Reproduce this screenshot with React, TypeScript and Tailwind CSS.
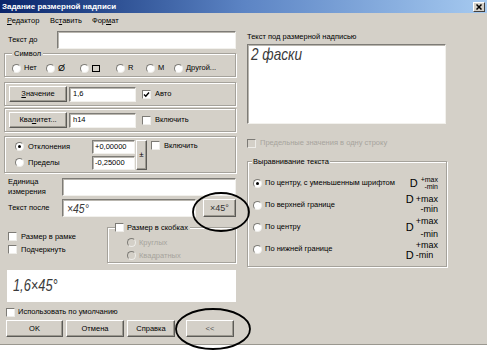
import React from 'react';

const sunken =
  'bg-white border border-t-[#7d7b76] border-l-[#7d7b76] border-b-[#f2f1ed] border-r-[#f2f1ed] shadow-[inset_1px_1px_0_#b9b6af]';
const raised =
  'bg-[#d4d0c8] border border-t-white border-l-white border-b-[#5c5b57] border-r-[#5c5b57] shadow-[inset_-1px_-1px_0_#9c9990] flex items-center justify-center';
const groupBox =
  'relative border border-[#a5a29b] shadow-[inset_1px_1px_0_#fff,1px_1px_0_#fff]';
// thin, narrow look of the drafting font
const drafting = 'inline-block italic origin-left scale-x-[0.8] text-[#3a3a3a]';

const Radio: React.FC<{ checked?: boolean; disabled?: boolean }> = ({ checked, disabled }) => (
  <span
    className={`w-[9px] h-[9px] shrink-0 rounded-full border border-t-[#7d7b76] border-l-[#7d7b76] border-b-[#eeede9] border-r-[#eeede9] flex items-center justify-center ${
      disabled ? 'bg-[#d4d0c8]' : 'bg-white'
    }`}
  >
    {checked && <span className="w-[3px] h-[3px] rounded-full bg-black" />}
  </span>
);

const Check: React.FC<{ checked?: boolean; disabled?: boolean }> = ({ checked, disabled }) => (
  <span
    className={`w-[9px] h-[9px] shrink-0 border border-t-[#7d7b76] border-l-[#7d7b76] border-b-[#eeede9] border-r-[#eeede9] flex items-center justify-center ${
      disabled ? 'bg-[#d4d0c8]' : 'bg-white'
    }`}
  >
    {checked && (
      <svg width="7" height="7" viewBox="0 0 7 7">
        <path d="M1 3.5 L2.8 5.3 L6 1.5" stroke="#000" strokeWidth="1.4" fill="none" />
      </svg>
    )}
  </span>
);

const U: React.FC<{ children: React.ReactNode }> = ({ children }) => (
  <span className="underline underline-offset-1">{children}</span>
);

const App: React.FC = () => {
  return (
    <div className="w-[487px] h-[351px] bg-white relative overflow-hidden font-['Liberation_Sans',Arial,sans-serif] text-[7.5px] leading-none text-black">
      <div className="h-[345px] bg-[#d4d0c8] border-b border-b-[#9a978f] flex flex-col">
        {/* title bar */}
        <div className="h-[13px] shrink-0 flex items-center justify-between pl-[2px] pr-[2px] bg-linear-to-r from-[#0a246a] via-[#5c84c4] to-[#a6caf0]">
          <span className="text-white font-bold text-[8px]">Задание размерной надписи</span>
          <span className="w-[12px] h-[10px] bg-[#d4d0c8] border border-t-white border-l-white border-b-[#404040] border-r-[#404040] flex items-center justify-center">
            <svg width="6" height="6" viewBox="0 0 6 6">
              <path d="M0.5 0.5 L5.5 5.5 M5.5 0.5 L0.5 5.5" stroke="#000" strokeWidth="1.5" />
            </svg>
          </span>
        </div>

        {/* menu */}
        <div className="h-[15px] shrink-0 flex items-center pl-[7px] text-[7.5px]">
          <span className="w-[43px]"><U>Р</U>едактор</span>
          <span className="w-[42px]">Вс<U>т</U>авить</span>
          <span>Фор<U>м</U>ат</span>
        </div>

        <div className="flex">
          {/* left column */}
          <div className="ml-[4px] w-[232px] flex flex-col">
            <div className="mt-[3px] h-[18px] flex items-center">
              <span className="w-[53px] pl-[4px]">Текст до</span>
              <div className={`${sunken} flex-1 h-full`} />
            </div>

            <div className={`${groupBox} mt-[4px] h-[24px] pt-[9px] pl-[7px]`}>
              <span className="absolute -top-[4px] left-[7px] bg-[#d4d0c8] px-[2px]">Символ</span>
              <div className="flex items-center h-[10px]">
                <span className="w-[34px] flex items-center gap-[3px]"><Radio /> Нет</span>
                <span className="w-[34px] flex items-center gap-[3px]"><Radio /> <span className="text-[9px]">Ø</span></span>
                <span className="w-[36px] flex items-center gap-[3px]"><Radio /> <span className="w-[8px] h-[7px] border border-black" /></span>
                <span className="w-[30px] flex items-center gap-[3px]"><Radio /> R</span>
                <span className="w-[28px] flex items-center gap-[3px]"><Radio /> M</span>
                <span className="flex items-center gap-[3px]"><Radio /> Другой...</span>
              </div>
            </div>

            <div className={`${groupBox} mt-[5px] h-[24px] pl-[4px] flex items-center`}>
              <div className={`${raised} w-[58px] h-[16px]`}><U>З</U>начение</div>
              <div className={`${sunken} ml-[2px] w-[67px] h-[15px] flex items-center pl-[3px]`}>1,6</div>
              <span className="ml-[6px] flex items-center gap-[4px]"><Check checked /> Авто</span>
            </div>

            <div className={`${groupBox} mt-[2px] h-[24px] pl-[4px] flex items-center`}>
              <div className={`${raised} w-[58px] h-[16px]`}>Ква<U>л</U>итет...</div>
              <div className={`${sunken} ml-[2px] w-[67px] h-[15px] flex items-center pl-[3px]`}>h14</div>
              <span className="ml-[6px] flex items-center gap-[4px]"><Check /> Включить</span>
            </div>

            <div className={`${groupBox} mt-[4px] h-[37px] flex items-center`}>
              <div className="w-[87px] pl-[10px] flex flex-col gap-[7px]">
                <span className="flex items-center gap-[4px]"><Radio checked /> Отклонения</span>
                <span className="flex items-center gap-[4px]"><Radio /> Пределы</span>
              </div>
              <div className="flex flex-col gap-[2px]">
                <div className={`${sunken} w-[43px] h-[14px] flex items-center pl-[2px]`}>+0,00000</div>
                <div className={`${sunken} w-[43px] h-[14px] flex items-center pl-[2px]`}>-0,25000</div>
              </div>
              <div className={`${raised} ml-[1px] w-[11px] h-[30px] text-[8px]`}>±</div>
              <span className="ml-[4px] self-start mt-[4px] flex items-center gap-[4px]"><Check /> Включить</span>
            </div>

            <div className="mt-[5px] h-[18px] flex items-center">
              <span className="w-[58px] pl-[4px] leading-[10px]">Единица<br />измерения</span>
              <div className={`${sunken} flex-1 h-full`} />
            </div>

            <div className="mt-[3px] h-[18px] flex items-center">
              <span className="w-[58px] pl-[4px]">Текст после</span>
              <div className={`${sunken} w-[134px] h-full flex items-center pl-[4px]`}>
                <span className={`${drafting} text-[13px]`}>×45°</span>
              </div>
              <div className={`${raised} ml-[7px] w-[33px] h-[18px] text-[9px] text-[#333]`}>×45°</div>
            </div>

            <div className="mt-[10px] h-[36px] flex">
              <div className="w-[103px] pl-[4px] pt-[3px] flex flex-col">
                <span className="h-[13px] flex items-center gap-[4px]"><Check /> Размер в рамке</span>
                <span className="h-[13px] flex items-center gap-[4px]"><Check /> Подчеркнуть</span>
              </div>
              <div className={`${groupBox} w-[129px] h-[36px] pt-[8px] pl-[19px] flex flex-col`}>
                <span className="absolute -top-[5px] left-[7px] bg-[#d4d0c8] pr-[2px] flex items-center gap-[3px]"><Check /> Размер в скобках</span>
                <span className="h-[13px] flex items-center gap-[3px] text-[#a7a49d]"><Radio disabled /> Круглых</span>
                <span className="h-[13px] flex items-center gap-[3px] text-[#a7a49d]"><Radio disabled /> Квадратных</span>
              </div>
            </div>

            <div className="mt-[7px] ml-[3px] w-[229px] h-[32px] bg-white flex items-center pl-[6px]">
              <span className={`${drafting} text-[16px]`}>1,6×45°</span>
            </div>

            <span className="mt-[5px] ml-[2px] h-[10px] flex items-center gap-[3px]"><Check /> Использовать по умолчанию</span>

            <div className="mt-[3px] h-[17px] flex">
              <div className={`${raised} ml-[2px] w-[57px]`}>OK</div>
              <div className={`${raised} ml-[3px] w-[58px]`}>Отмена</div>
              <div className={`${raised} ml-[3px] w-[48px]`}>Справка</div>
              <div className={`${raised} ml-[11px] w-[48px] text-[#555]`}>&lt;&lt;</div>
            </div>
          </div>

          {/* right column */}
          <div className="ml-[11px] w-[200px] flex flex-col">
            <span className="mt-[4px] h-[10px] flex items-center">Текст под размерной надписью</span>
            <div className={`${sunken} mt-[2px] w-[199px] h-[80px] pl-[3px] pt-[1px]`}>
              <span className={`${drafting} text-[17px]`}>2 фаски</span>
            </div>
            <span className="mt-[14px] h-[10px] flex items-center gap-[4px] text-[#a7a49d]"><Check disabled /> Предельные значения в одну строку</span>

            <div className={`${groupBox} mt-[13px] h-[106px] pt-[10px] pl-[5px] pr-[8px] flex flex-col`}>
              <span className="absolute -top-[4px] left-[4px] bg-[#d4d0c8] px-[1px]">Выравнивание текста</span>

              <div className="h-[22px] flex items-center">
                <span className="flex items-center gap-[3px]"><Radio checked /> По центру, с уменьшенным шрифтом</span>
                <span className="ml-auto flex items-center">
                  <span className="text-[11px] mr-[3px]">D</span>
                  <span className="flex flex-col items-end text-[7px] leading-[7px]"><span>+max</span><span>-min</span></span>
                </span>
              </div>

              <div className="h-[22px] flex items-center">
                <span className="flex items-center gap-[3px]"><Radio /> По верхней границе</span>
                <span className="ml-auto grid grid-cols-[10px_auto] items-end text-[9px] leading-[10px] -mt-[3px]">
                  <span className="text-[11px]">D</span><span>+max</span>
                  <span /><span className="text-right">-min</span>
                </span>
              </div>

              <div className="h-[22px] flex items-center">
                <span className="flex items-center gap-[3px]"><Radio /> По центру</span>
                <span className="ml-auto flex items-center">
                  <span className="text-[11px] mr-[2px]">D</span>
                  <span className="flex flex-col items-end gap-[5px] text-[9px] leading-[8px]"><span>+max</span><span>-min</span></span>
                </span>
              </div>

              <div className="h-[22px] flex items-center">
                <span className="flex items-center gap-[3px]"><Radio /> По нижней границе</span>
                <span className="ml-auto grid grid-cols-[10px_auto] text-[9px] leading-[10px] mt-[2px]">
                  <span /><span className="text-right">+max</span>
                  <span className="text-[11px]">D</span><span>-min</span>
                </span>
              </div>
            </div>
          </div>
        </div>
      </div>

      {/* hand-drawn marks over the dialog */}
      <svg className="absolute inset-0 pointer-events-none" width="487" height="351">
        <ellipse cx="221" cy="212" rx="28" ry="19" fill="none" stroke="#000" strokeWidth="1.8" />
        <ellipse cx="213" cy="329" rx="37" ry="20" fill="none" stroke="#000" strokeWidth="1.8" />
      </svg>
    </div>
  );
};

export default App;
